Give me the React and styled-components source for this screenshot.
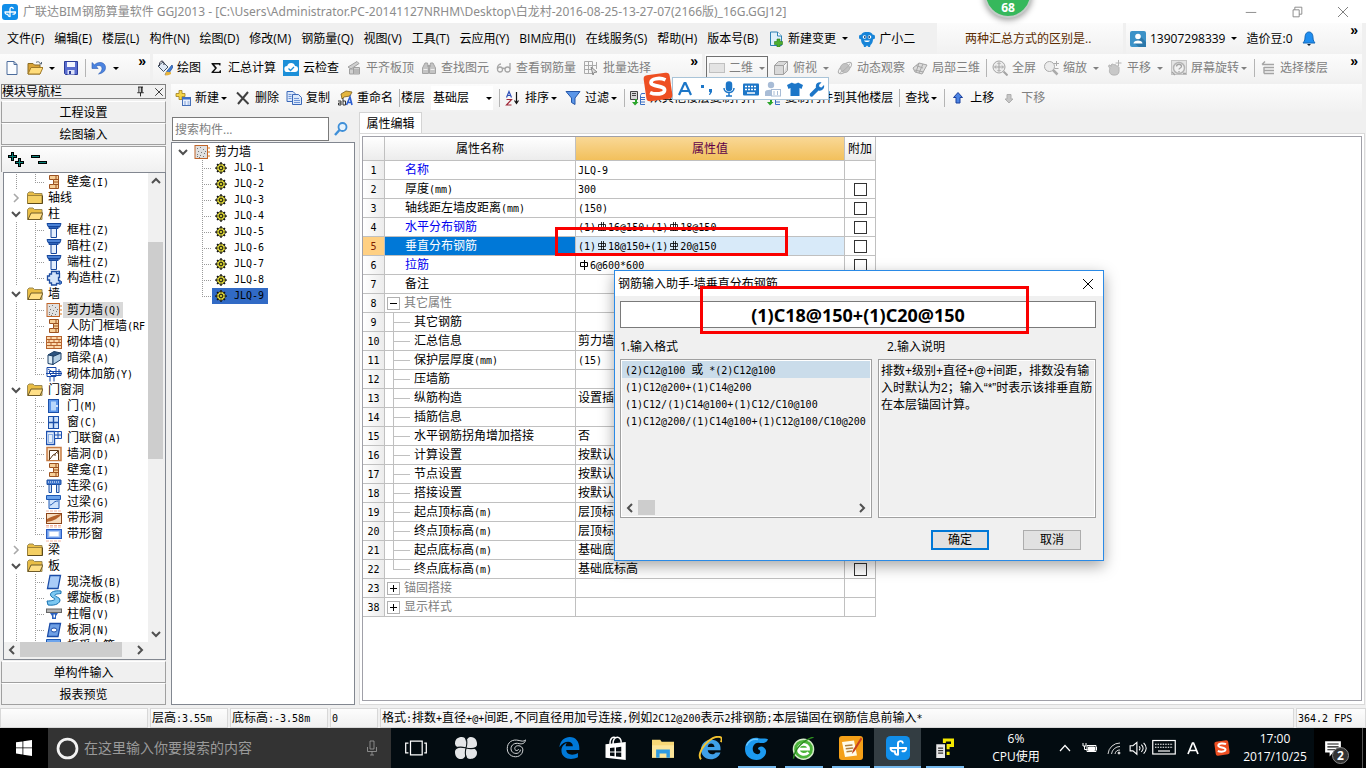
import React from "react"
import styled, { createGlobalStyle, css } from "styled-components"

const uiFont = `"Open Sans", "Noto Sans CJK SC", sans-serif`

/* ---------- data ---------- */

const menus = [
  "文件(F)", "编辑(E)", "楼层(L)", "构件(N)", "绘图(D)", "修改(M)", "钢筋量(Q)",
  "视图(V)", "工具(T)", "云应用(Y)", "BIM应用(I)", "在线服务(S)", "帮助(H)", "版本号(B)",
]

const drawTools = [
  { icon: "paint", label: "绘图" },
  { icon: "sigma", label: "汇总计算" },
  { icon: "cloud", label: "云检查" },
  { icon: "align", label: "平齐板顶", off: true },
  { icon: "binoculars", label: "查找图元", off: true },
  { icon: "glasses", label: "查看钢筋量", off: true },
  { icon: "batch", label: "批量选择", off: true },
]

const viewTools = [
  { icon: "cube", label: "俯视", caret: "wide" },
  { icon: "orbit", label: "动态观察" },
  { icon: "part3d", label: "局部三维" },
  { sep: true },
  { icon: "fullscreen", label: "全屏" },
  { icon: "zoomer", label: "缩放", caret: "wide" },
  { icon: "pan", label: "平移", caret: "wide" },
  { icon: "rotate", label: "屏幕旋转", caret: "tight" },
  { sep: true },
  { icon: "floors", label: "选择楼层" },
]

const navTree = [
  { icon: "niche", label: "壁龛(I)", last: true },
  { folder: "closed", label: "轴线" },
  { folder: "open", label: "柱" },
  { icon: "column", label: "框柱(Z)" },
  { icon: "column", label: "暗柱(Z)" },
  { icon: "column", label: "端柱(Z)" },
  { icon: "gearColumn", label: "构造柱(Z)", last: true },
  { folder: "open", label: "墙" },
  { icon: "wall", label: "剪力墙(Q)", active: true },
  { icon: "niche", label: "人防门框墙(RF" },
  { icon: "brick", label: "砌体墙(Q)" },
  { icon: "darkBeam", label: "暗梁(A)" },
  { icon: "rebarWall", label: "砌体加筋(Y)", last: true },
  { folder: "open", label: "门窗洞" },
  { icon: "door", label: "门(M)" },
  { icon: "window", label: "窗(C)" },
  { icon: "doorWindow", label: "门联窗(A)" },
  { icon: "wallHole", label: "墙洞(D)" },
  { icon: "niche", label: "壁龛(I)" },
  { icon: "linkBeam", label: "连梁(G)" },
  { icon: "lintel", label: "过梁(G)" },
  { icon: "stripHole", label: "带形洞" },
  { icon: "stripWindow", label: "带形窗", last: true },
  { folder: "closed", label: "梁" },
  { folder: "open", label: "板" },
  { icon: "slab", label: "现浇板(B)" },
  { icon: "spiral", label: "螺旋板(B)" },
  { icon: "cap", label: "柱帽(V)" },
  { icon: "slabHole", label: "板洞(N)" },
  { icon: "lintel", label: "板受力筋(S)" },
]

const walls = [1, 2, 3, 4, 5, 6, 7, 8, 9].map(n => `JLQ-${n}`)

const rows = [
  { n: 1, name: "名称", value: "JLQ-9", blue: true, noBox: true },
  { n: 2, name: "厚度(mm)", value: "300" },
  { n: 3, name: "轴线距左墙皮距离(mm)", value: "(150)" },
  { n: 4, name: "水平分布钢筋", value: "(1)C16@150+(1)C18@150", rebar: true, blue: true },
  { n: 5, name: "垂直分布钢筋", value: "(1)C18@150+(1)C20@150", rebar: true, selected: true },
  { n: 6, name: "拉筋", value: "A6@600*600", rebar: true, blue: true },
  { n: 7, name: "备注", value: "" },
  { n: 8, name: "其它属性", value: "", group: "minus", noBox: true },
  { n: 9, name: "其它钢筋", value: "", child: true },
  { n: 10, name: "汇总信息", value: "剪力墙", child: true },
  { n: 11, name: "保护层厚度(mm)", value: "(15)", child: true },
  { n: 12, name: "压墙筋", value: "", child: true },
  { n: 13, name: "纵筋构造", value: "设置插筋", child: true },
  { n: 14, name: "插筋信息", value: "", child: true },
  { n: 15, name: "水平钢筋拐角增加搭接", value: "否", child: true },
  { n: 16, name: "计算设置", value: "按默认计算设置计算", child: true },
  { n: 17, name: "节点设置", value: "按默认节点设置计算", child: true },
  { n: 18, name: "搭接设置", value: "按默认搭接设置计算", child: true },
  { n: 19, name: "起点顶标高(m)", value: "层顶标高", child: true },
  { n: 20, name: "终点顶标高(m)", value: "层顶标高", child: true },
  { n: 21, name: "起点底标高(m)", value: "基础底标高", child: true },
  { n: 22, name: "终点底标高(m)", value: "基础底标高", child: true, last: true },
  { n: 23, name: "锚固搭接", value: "", group: "plus", noBox: true },
  { n: 38, name: "显示样式", value: "", group: "plus", noBox: true },
]

const formats = [
  "(2)C12@100 或 *(2)C12@100",
  "(1)C12@200+(1)C14@200",
  "(1)C12/(1)C14@100+(1)C12/C10@100",
  "(1)C12@200/(1)C14@100+(1)C12@100/C10@200",
]

/* ---------- icons ---------- */

const folderBack = <path d="M.5 3.500 2 2h4l1.500 1.500H15v10H.5z" fill="#e9bd45" stroke="#9c8a55" />

const icons = {
  app: (
    <>
      <rect width="16" height="16" rx="3" fill="#118ee9" />
      <path
        d="M3 8h10.500M8 12.500V5c0-1.800 2.800-2.200 3.200-.5M3 8c0 2 1.500 2.500 3 2.200M13.500 8c0 2-1.500 2.300-2.500 2.200M8 12.500c-1.300 0-2-.6-2-1.500"
        fill="none"
        stroke="#fff"
        strokeWidth="1.300"
        strokeLinecap="round"
      />
    </>
  ),
  page: <path d="M3 1.500h7l3 3v10H3z M10 1.500v3h3" fill="#fbfdff" stroke="#4c6c9c" />,
  folderOpenBig: (
    <>
      <path d="M1 3.500h5l1.500 1.500H13v9H1z" fill="#d9a336" stroke="#8a6b22" />
      <path d="M1 14 4 7.500h12L13 14z" fill="#ffdc7a" stroke="#a07a28" />
      <path d="M9 2.500c2-1.500 4-.5 4.500 1.500m1-2v2h-2" fill="none" stroke="#567" />
    </>
  ),
  save: (
    <>
      <path d="M1.500 1.500h13v13h-12l-1-1z" fill="#5a6ed0" stroke="#2c3c98" />
      <path d="M4 2h8v5H4z" fill="#f4f6fe" />
      <path d="M4.500 10h7v4.500h-7z" fill="#dce2f8" />
      <path d="M6 11h2v3H6z" fill="#2c3c98" />
    </>
  ),
  undo: <path d="M1 2.500v6h6.200L5 6.500c2.500-2 6-.8 6 2 0 2-1 3.500-3.500 5.500 4.500-.8 7-3 7-6.500C14.500 2.500 8 .5 3.500 4.800z" fill="#4c84e0" stroke="#2c5cb4" strokeWidth=".6" />,
  paint: (
    <>
      <path d="m1 6 5-4 5 5-4.500 4.500z" fill="#dfe8f4" stroke="#456" />
      <path d="M2.500 6c-.5-3 1-5 2.500-5s2 2 2 4" fill="none" stroke="#334" />
      <path d="m15 5-5 6-2 4 4-2 4-6z" fill="#3f7fd8" stroke="#1d4690" strokeWidth=".7" />
      <path d="M9 12c2-1 3 1 5 0v2c-2 1-4 2-6 1z" fill="#e7b33c" />
    </>
  ),
  sigma: <path d="M3.500 3h9v2.500h-1L10.800 4.400H6.200L9 8l-3.200 3.700h5.200l1-1.500h1V13h-9.500v-1L7 8.300 3.500 4z" fill="#111" />,
  cloud: (
    <>
      <rect width="16" height="16" fill="#1c8fd8" />
      <path d="M4.500 12a3 3 0 0 1-.3-6A4 4 0 0 1 12 6a3 3 0 0 1 0 6z" fill="#fff" />
      <path d="m5.500 8.500 2 2 3.500-3.500" fill="none" stroke="#1c8fd8" strokeWidth="1.300" />
    </>
  ),
  align: (
    <g fill="#d0d0d0" stroke="#a0a0a0">
      <path d="m2 7 9-5.500 2 2L5 9z" />
      <path d="M3.500 9h4v5h-4z M7.500 7.500h6v6.500h-6z" />
      <path d="M8 10h5M8 12h5" />
    </g>
  ),
  binoculars: (
    <g fill="#c4c4c4" stroke="#a4a4a4">
      <path d="M1.500 13.500V8L4 3h2.500l1 5v5.500z M8.500 13.500V8l1-5H12l2.500 5v5.500z" />
      <path d="M6.500 6h3" strokeWidth="2" />
      <path d="M2.500 9.500h4M9.500 9.500h4" stroke="#eee" />
    </g>
  ),
  glasses: (
    <g fill="none" stroke="#a6a6a6" strokeWidth="1.300">
      <circle cx="4" cy="9.500" r="2.500" />
      <circle cx="11.500" cy="9.500" r="2.500" />
      <path d="M6.500 9c.5-1 2-1 2.500 0M1.500 9C1 6 3 4 5 4M14 9V3" />
    </g>
  ),
  batch: (
    <g fill="none" stroke="#aaa">
      <path d="M1.500 1.500h8v12h-8zM1.500 5.500h12M1.500 9.500h8M5.500 1.500v12" />
      <path d="m8 7 6 5-3 .5-1 2.500z" fill="#ddd" stroke="#888" />
      <path d="M13.500 2v7" />
    </g>
  ),
  flat: <rect x=".5" y="3.500" width="15" height="9" fill="#e3e3e3" stroke="#c0c0c0" />,
  cube: <path d="M1.500 5.500h9v9h-9z M1.500 5.500l4-4h9l-4 4 M14.500 1.500v9l-4 4" fill="#d9d9d9" stroke="#a2a2a2" />,
  orbit: (
    <g stroke="#b0b0b0">
      <ellipse cx="8" cy="8" rx="8" ry="3.500" transform="rotate(-38 8 8)" fill="none" />
      <circle cx="8" cy="8" r="4.500" fill="#c2c2c2" stroke="#b4b4b4" />
      <path d="M3 12.500C7 11 11 7 13 3.500" fill="none" />
    </g>
  ),
  part3d: (
    <g fill="#dcdcdc" stroke="#a6a6a6">
      <path d="m1 8 6-5 8 2-5 9-7-2z" />
      <path d="m4 5.500 7 2.500M7 3 4 12M11 4l-4 9M2.500 10l9 2" fill="none" />
    </g>
  ),
  fullscreen: (
    <g fill="none" stroke="#a4a4a4">
      <circle cx="7" cy="7" r="6" fill="#ececec" />
      <path d="M7 3v8M3 7h8M5.500 4 7 2.500 8.500 4M5.500 10 7 11.500 8.500 10M4 5.500 2.500 7 4 8.500M10 5.500 11.500 7 10 8.500" />
      <path d="m11.500 11.500 4 4" strokeWidth="2" />
    </g>
  ),
  zoomer: (
    <g fill="none" stroke="#ababab">
      <circle cx="6.500" cy="6.500" r="5" fill="#ececec" />
      <path d="m10 10 4.500 4.500" strokeWidth="2.500" />
      <path d="M11 3.500h5M13.500 1v5M11.500 8.500h4" />
    </g>
  ),
  pan: (
    <g fill="#c8c8c8" stroke="#b4b4b4">
      <path d="M3 8c-2-1-2-3 0-3l1 1.500V5c1-1.500 2.500-1 3 0 1-1 2 0 2.500 1 1-.5 2 .5 2.500 1.500v4c0 3-3 4-6 3.500C3 14.500 1.500 12 3 8z" />
      <path d="M11.500 0v6M8.500 3h6" fill="none" />
    </g>
  ),
  rotate: (
    <g fill="none" stroke="#c4c4c4">
      <rect x=".5" y=".5" width="15" height="14" fill="#e4e4e4" />
      <circle cx="8" cy="8" r="5.500" fill="#f2f2f2" stroke="#b4b4b4" strokeWidth="1.500" />
      <path d="M5.500 6.500c0-3 5-3 5 0 0 1.500-2.500 1.500-2.500 3M8 11v1.500M1 12l3 3M12 13.500h3" stroke="#a4a4a4" strokeWidth="1.300" />
    </g>
  ),
  floors: (
    <g fill="none" stroke="#a4a4a4" strokeWidth="1.400">
      <path d="M2 4.500h12M4 7.500h10M4 10.500h10M4 13.500h10M2 4.500 5 1.500M4 7v6.500" />
    </g>
  ),
  addNew: (
    <>
      <path d="M4 .5h3v3h3v3H7v3H4v-3H1v-3h3z" fill="#f6d648" stroke="#a08020" strokeWidth=".8" />
      <rect x="7.500" y="7.500" width="8" height="8" fill="#e9f0fc" stroke="#4770b8" />
      <path d="M8 8.500h7" stroke="#3b6fcf" strokeWidth="2" />
      <path d="M9 12h2M12.500 12h2M9 14h2M12.500 14h2" stroke="#7a9cd8" />
    </>
  ),
  remove: <path d="M2 2.500 13.500 14M13 2 3 14" stroke="#404040" strokeWidth="2" fill="none" />,
  copy: (
    <g fill="#dbe8fb" stroke="#3b68b8">
      <path d="M1 1.500h6l2 2v8H1z" />
      <path d="M6.500 4.500h6l3 3v7h-9z" />
      <path d="M8 8.500h5M8 10.500h6M8 12.500h6M2.500 4.500h3M2.500 6.500h3M2.500 8.500h3" stroke="#6f95d6" />
    </g>
  ),
  rename: (
    <>
      <path d="M4 4 9 1l6 1-2 4-6 1-2 2z" fill="#e3b53f" stroke="#7a5d1d" strokeWidth=".8" />
      <path d="M9.500 15 13 7l2 8M11 12.500h4" stroke="#2d5fd0" strokeWidth="1.600" fill="none" />
      <path d="M1 11h3v4H1.500v-2H4M6 8v7h2.500v-4H6" stroke="#333" fill="none" />
    </>
  ),
  sortAz: (
    <>
      <path d="M1.500 7.500 4 1.500l2.500 6M2.500 5.500h3" fill="none" stroke="#2c4fb8" strokeWidth="1.200" />
      <path d="M1.500 9.500h5l-5 5.500h5" fill="none" stroke="#a02838" strokeWidth="1.200" />
      <path d="M11.500 2v11M9.500 10.500l2 3 2-3" fill="none" stroke="#111" strokeWidth="1.200" />
    </>
  ),
  funnel: <path d="M1 1.500h14L10 8v6.500l-3.500-2V8z" fill="#5b96e8" stroke="#2657a8" />,
  copyFrom: (
    <>
      <path d="M.5 1.500h7v8h-7z" fill="#d6d6d6" stroke="#444" />
      <path d="M2 3.500h4M2 5.500h4" stroke="#444" />
      <path d="M5 9v3H2l3 3.500L8.500 12H7V9z" fill="#2ba52b" />
      <path d="M15 3.500h-3.500l-1 2v9H15M10.500 7.500H15M10.500 9.500H15M10.500 12H15" fill="none" stroke="#3a6fc4" />
    </>
  ),
  arrowUp: <path d="M8 2.500 12.500 7.500H10V13H6V7.500H3.500z" fill="#4c84e4" stroke="#1b409c" />,
  arrowDown: <path d="M8 13 4 9h2V4.500h4V9h2z" fill="#c6c6c6" stroke="#aeaeae" />,
  docPlus: (
    <>
      <path d="M2.500 1h7l4 4v9.500h-11z" fill="#dff0fb" stroke="#2d80b4" />
      <path d="M9.500 1v4h4" fill="#fff" stroke="#2d80b4" />
      <path d="M9 8h3v2.500h2.500v3H12V16H9v-2.500H6.500v-3H9z" fill="#4caf2e" stroke="#2b7a18" strokeWidth=".6" />
    </>
  ),
  mascot: (
    <>
      <path d="M0 6c0-2 1-2.500 2-2 1-2.500 3.500-3 6-3s5 .5 6 3c1-.5 2 0 2 2s-1 2.500-2 2c0 3-1 5-2.500 6l-.5 2H9.500L8 14.500 6.500 16H5l-.5-2C3 13 2 11 2 8 1 8.500 0 8 0 6z" fill="#1784d8" />
      <circle cx="5.500" cy="6" r="1.800" fill="#fff" />
      <circle cx="10.500" cy="6" r="1.800" fill="#fff" />
      <circle cx="5.800" cy="6" r=".9" fill="#103c70" />
      <circle cx="10.200" cy="6" r=".9" fill="#103c70" />
      <path d="M5 9.500h6c-1 2-5 2-6 0z" fill="#fff" />
    </>
  ),
  user: (
    <>
      <rect width="16" height="16" rx="2" fill="#3c92c8" />
      <path d="m10 5 6 6v5H9l-5-4z" fill="#2c78aa" />
      <circle cx="8" cy="5.500" r="2.800" fill="#fff" />
      <path d="M3.500 12.500c0-4 9-4 9 0z" fill="#fff" />
    </>
  ),
  bell: (
    <>
      <path d="M8 1c3 0 4 3 4 6s1.500 4 2 5H2c.5-1 2-2 2-5s1-6 4-6z" fill="#1f8ef0" stroke="#1568b8" />
      <path d="M6 13h4l-2 2z" fill="#123" />
    </>
  ),
  magnify: (
    <g fill="none" stroke="#3f8fd8">
      <circle cx="9.500" cy="6" r="4" strokeWidth="1.800" fill="#e7f3fd" />
      <path d="m6.500 9-4.500 5" strokeWidth="2.400" />
    </g>
  ),
  expandAll: (
    <g fill="none">
      <path d="M4.500 0v9M0 4.500h9M11.500 6v9M7 10.500h9" stroke="#000" strokeWidth="3" />
      <path d="M4.500 1v7M1 4.500h7M11.500 7v7M8 10.500h7" stroke="#0a8078" />
    </g>
  ),
  collapseAll: (
    <g fill="none">
      <path d="M0 4.500h9M7 10.500h9" stroke="#000" strokeWidth="3" />
      <path d="M1 4.500h7M8 10.500h7" stroke="#0a8078" />
    </g>
  ),
  folderClosed: (
    <>
      {folderBack}
      <path d="M.5 5.500H15v8H.5z" fill="#f4cf63" stroke="#8d7430" strokeWidth=".8" />
      <path d="M1 13.500h14.500v-8" fill="none" stroke="#5c4a1c" />
    </>
  ),
  folderOpen: (
    <>
      {folderBack}
      <path d="M1 13.500 4 7h12l-3 6.500z" fill="#ffdf86" stroke="#6e5a28" />
    </>
  ),
  niche: (
    <g fill="#f7cf98" stroke="#9c5220">
      <path d="M3.500 1.500h9v13h-9v-4h4v-5h-4z" />
      <path d="M7.500 5.500h5M7.500 8h5M7.500 10.500h5M10 1.500v4M10 10.500v4" fill="none" />
    </g>
  ),
  column: (
    <g stroke="#16479c">
      <path d="M1 1.500h14l-1 3H2z" fill="#4c83d6" />
      <path d="M3 4.500h9v2H3z" fill="#2d62b8" />
      <path d="M5 6.500h5.500v9H5z" fill="#e3eefc" />
      <path d="m12 6.500 2-2" />
    </g>
  ),
  gearColumn: (
    <g stroke="#1d4ca0" fill="#d4e4fa">
      <path d="M5.500 1.500h5v2h3v4h-1v3h1v3h-3v1.500h-5v-2h-2v-3h-2v-4h2v-2h2z" strokeWidth="1.300" />
      <path d="m10.500 1.500 3-.5v2.500M13.500 10.500l2 1v2l-2 1" fill="#4c83d6" />
    </g>
  ),
  wall: (
    <>
      <rect x="1" y="1.500" width="12.500" height="13" fill="#e0e0e0" stroke="#c06428" />
      <path
        d="M3 4.500h1M6 3.500h1M9 5.500h1M4 7.500h1M7 8.500h1M10 9.500h1M3 10.500h1M6 11.500h1M9 12.500h1M11 7.500h1M5 13.500h1M3 12.500h1"
        stroke="#777"
      />
      <path d="M13.500 4h2.500M13.500 8h2.500M13.500 12h2.500" stroke="#d87820" />
    </>
  ),
  brick: (
    <g stroke="#b5622c" fill="#fbd9ae">
      <rect x=".5" y="2.500" width="15" height="12" />
      <path d="M.5 5.500h15M.5 8.500h15M.5 11.500h15M5 2.500v3M11 2.500v3M3 5.500v3M8 5.500v3M13 5.500v3M5 8.500v3M11 8.500v3M8 11.500v3" />
    </g>
  ),
  darkBeam: (
    <g stroke="#1c3f66">
      <path d="m2 5 6-3.500L15 3 9 6z" fill="#2d5480" />
      <path d="M2 5v8.500l5 1V6z" fill="#dcecf6" />
      <path d="M7 6.500v8l8-5V3z" fill="#b4cfe4" />
    </g>
  ),
  rebarWall: <path d="M1 10.500V1.500h9v9zM0 7.500h16M3 5.500h12v4H5zM4 10v5.500M8 10v5.500M2 3l6 4M13 3v6" fill="none" stroke="#1546a8" />,
  door: (
    <>
      <rect x="2.500" y="1.500" width="10" height="13" fill="#5c96ea" stroke="#1b4fa8" />
      <rect x="5" y="3.500" width="5" height="9" fill="#b8d6fa" />
      <circle cx="11" cy="8" r="1" fill="#fff" />
    </>
  ),
  window: (
    <>
      <rect x="2.500" y="2.500" width="10" height="12" fill="#cfe3fb" stroke="#1b4fa8" />
      <path d="M7.500 2.500v12M2.500 8.500h10" stroke="#1b4fa8" strokeWidth="1.400" />
    </>
  ),
  doorWindow: (
    <g fill="#e6f0fc" stroke="#1c50b0">
      <rect x=".5" y="1.500" width="8" height="13" strokeWidth="1.400" />
      <rect x="2.500" y="4.500" width="4" height="8" stroke="#8fb2e6" />
      <path d="M8.500 1.500h7v7h-7zM12 1.500v7M8.500 5h7" />
    </g>
  ),
  wallHole: (
    <>
      <rect x="1" y="1.500" width="14" height="13" fill="#fbe3c8" stroke="#c67c44" strokeWidth="1.500" />
      <path d="M3.500 14V4.500h9V14" fill="#fff" stroke="#5a3818" />
      <path d="m4 13 3-4 2-1 3-3M9 8v2M12 5v3" fill="none" stroke="#5a3818" />
    </>
  ),
  linkBeam: (
    <g stroke="#1d50a4">
      <path d="M1 2h14v4.500H1z" fill="#3c74cc" />
      <path d="M2 4h12" strokeDasharray="1 1" stroke="#fff" />
      <path d="M3 6.500h2.500v8H3zM10.500 6.500H13v8h-2.500z" fill="#cfe0f8" />
    </g>
  ),
  lintel: (
    <g stroke="#1d58b4" fill="#cfe3fb">
      <path d="M.5 1.500h14v4H.5z" fill="#6da4ec" />
      <path d="M3 5.500h10v9H3z" />
      <path d="M4 11c3 0 3-4 8-4" fill="none" />
    </g>
  ),
  stripHole: (
    <>
      <rect x=".5" y="3.500" width="15" height="10" fill="#f7ddc0" stroke="#8c4418" />
      <path d="M1 12c5-1 9-2 14-7v-1C9 5 5 7 1 9z" fill="#b5622c" />
      <path d="M0 1h16M0 15.500h16" stroke="#f2b4a0" strokeDasharray="3 1" />
    </>
  ),
  stripWindow: (
    <>
      <rect x=".5" y="3.500" width="15" height="9" fill="#6c9cec" stroke="#2a5cc0" />
      <rect x="3" y="5.500" width="10" height="5" fill="#fff" stroke="#b8cff4" />
      <path d="M0 1h16M0 15h16" stroke="#f2b4a0" strokeDasharray="3 1" />
    </>
  ),
  slab: <path d="M4 1.500h10.500L12 14.500H1.500z" fill="#a9ccf8" stroke="#1a4ca8" strokeWidth="1.300" />,
  spiral: <path d="M15 1C7 0 3 3 5 6c1 2 4 2 4 3s-3 2-8 2l1 4c8 1 12-2 12-5s-5-3-5-4.500S11 4 15 3.500z" fill="#7cc8f2" stroke="#1670b0" />,
  cap: (
    <>
      <rect x=".5" y="3" width="15" height="3.500" fill="#b4b4b4" stroke="#666" />
      <path d="M4 7h8l-2 3v3H6v-3z" fill="#2b62c0" />
      <path d="M7.500 8.500h1.500v3H7.500z" fill="#fff" />
    </>
  ),
  slabHole: (
    <>
      <path d="M4 1.500h10.500L12 14.500H1.500z" fill="#6e9fe4" stroke="#1a4ca8" strokeWidth="1.300" />
      <ellipse cx="8" cy="8" rx="3" ry="2" fill="#fff" stroke="#1a4ca8" />
    </>
  ),
  cog: (
    <>
      <path d="M8 1.500v13M1.500 8h13M3.500 3.500l9 9M12.500 3.500l-9 9" stroke="#111" strokeWidth="2" />
      <circle cx="8" cy="8" r="5" fill="#ece434" stroke="#222" />
      <path d="M8 3.500v9M3.500 8h9M5 5l6 6M11 5l-6 6" stroke="#222" strokeWidth=".8" />
      <circle cx="8" cy="8" r="1.800" fill="#ece434" stroke="#111" />
    </>
  ),
  sogou: (
    <>
      <rect x="1" y="1" width="14" height="14" rx="2" fill="#ee4f22" transform="rotate(-8 8 8)" />
      <path d="M12 4.200C9 2.800 4.300 3.500 4.300 5.600c0 2.400 7.200 1.500 7.200 4 0 2.200-4.700 2.700-7.700 1.400" fill="none" stroke="#fff" strokeWidth="2" />
    </>
  ),
  letterA: <path d="M2 14 7.500 2h1L14 14M4 10h8" fill="none" stroke="#1c76c8" strokeWidth="2.200" />,
  comma: <path d="M2 4h3v3H2zM10 8h3v3l-2 3h-1l1-3h-1z" fill="#1c76c8" />,
  mic: (
    <g fill="none" stroke="#1c76c8" strokeWidth="1.500">
      <rect x="5.500" y="1" width="5" height="8.500" rx="2.500" fill="#1c76c8" />
      <path d="M3 7c0 6 10 6 10 0M8 11.500V15M5 15h6" />
    </g>
  ),
  keyboard: (
    <>
      <rect y="2.500" width="16" height="12" rx="1" fill="#1c76c8" />
      <path d="M2 5.500h12M2 8.500h12" stroke="#fff" strokeWidth="1.500" strokeDasharray="2 1" />
      <path d="M4 12h8" stroke="#fff" strokeWidth="1.500" />
    </>
  ),
  person: (
    <g fill="#a8bcd6">
      <circle cx="6" cy="4" r="3.200" />
      <path d="M0 15V11c0-3 10-3 11 0v4z" />
      <rect x="6.500" y="8.500" width="9" height="6.500" fill="#fff" stroke="#a8bcd6" />
      <path d="M9 10v4M12.500 10v4" stroke="#a8bcd6" />
    </g>
  ),
  shirt: <path d="M5 1.500c1 1.500 5 1.500 6 0l5 2.500-1.500 4L12.500 7v8h-9V7L1.500 8 0 4z" fill="#1c76c8" />,
  wrench: <path d="m1 12.500 6-6C6 3 9 .5 12.500 1.500L10 4l.5 2 2 .5L15 4c1 3.500-2 6.500-5.500 5.500l-6 6c-2 1-3.500-1-2.500-3z" fill="#1c76c8" />,
  pin: <path d="M5 2.500h6M6 2.500V9M10 2.500V9M9 2.500V9M4 9.500h8M8 9.500V14" fill="none" stroke="#000" />,
  cross: <path d="m3 3 10 10M13 3 3 13" fill="none" stroke="currentColor" />,
  min: <path d="M2 8.500h12" fill="none" stroke="currentColor" />,
  restore: <path d="M3.500 5.500h7v8h-7zM5.500 5.500v-3h8v8h-3" fill="none" stroke="currentColor" />,
  chevUp: <path d="m4 10 4-4 4 4" fill="none" stroke="#505050" strokeWidth="2" />,
  chevDown: <path d="m4 6 4 4 4-4" fill="none" stroke="#505050" strokeWidth="2" />,
  chevLeft: <path d="M10 4 6 8l4 4" fill="none" stroke="#505050" strokeWidth="2" />,
  chevRight: <path d="m6 4 4 4-4 4" fill="none" stroke="#505050" strokeWidth="2" />,
  treeRight: <path d="m6 4 4 4-4 4" fill="none" stroke="#a8a8a8" strokeWidth="1.600" />,
  // taskbar
  start: <path d="m0 2.300 6.500-.9v6.100H0zM7.300 1.300 16 0v7.500H7.300zM0 8.300h6.500v6.200L0 13.600zM7.300 8.300H16V16l-8.700-1.300z" fill="#fff" />,
  cortana: <circle cx="8" cy="8" r="6.600" fill="none" stroke="#f2f2f2" strokeWidth="1.900" />,
  micThin: <path d="M6 1h4v8H6zM3.500 7v4.500h9V7M8 11.500V15M6 15h4" fill="none" stroke="#a0a0a0" strokeWidth=".8" />,
  taskview: <path d="M4 3h8.500v10H4zM2.500 4.500h-2v7h2M14 4.500h1.500v7H14" fill="none" stroke="#fff" strokeWidth=".9" />,
  pinwheel: (
    <>
      <g fill="#e4e6e8">
        <path d="M8 8C5 8.500 0 8 0 4.500 0 1 3 0 5 0c2.500 0 3.500 2 3 8z" />
        <path d="M8 8C7.500 5 8 0 11.500 0 15 0 16 3 16 5c0 2.500-2 3.500-8 3z" />
        <path d="M8 8c3-.5 8 0 8 3.500 0 3.500-3 4.500-5 4.500-2.500 0-3.500-2-3-8z" />
        <path d="M8 8c.5 3 0 8-3.500 8C1 16 0 13 0 11c0-2.500 2-3.500 8-3z" />
      </g>
      <path
        d="M7.500 0c2 3 1 6 .5 8s-1 5 .5 8M0 8.500c3-2 6-1 8-.5s5 1 8-.5"
        fill="none"
        stroke="#0b1418"
        strokeWidth=".8"
      />
    </>
  ),
  swirl: (
    <g fill="none" stroke="#d4d6d8" strokeWidth=".8">
      <path d="M15.500 1.500c-1 1.500-3 1-5 .5C5 .5 1 3.500 1 8.500c0 8 12 9 12.500 1 0-4-6.500-4.500-6.500-1 0 2 3 2 3 .3" />
      <path d="M15.500 1.500c0 3-3 3.500-5 3C7 3.500 4 5.500 4 8.500c0 5 7.500 5 7.500.8" />
    </g>
  ),
  edge: <path d="M1 7.500C1.500 2.500 5 0 8.500 0 13 0 15.500 3.500 15.500 8v1.500H6c.2 4 5.500 4 8.500 2.200v3C9 17.500 2.500 15.500 2.500 9.800 2.500 7 4.500 5 6.500 4.200 5.800 5 5.600 6 5.600 6.800h5.200c0-4.500-6.500-4.500-9.800.7z" fill="#0078d7" />,
  store: (
    <>
      <path d="M1 5.500 14.500 4v12L1 14.500z" fill="#fff" />
      <path d="M4 5.500C4 1 6 .5 7.500 1M6 5.500c0-6 5.500-6 5.500-1" fill="none" stroke="#fff" />
      <path d="m4 8 3-.3v2.600H4zM8 7.600l3.500-.4v3.100H8zM4 11h3v2.500l-3-.3zM8 11h3.500v3L8 13.600z" fill="#050c10" />
    </>
  ),
  explorer: (
    <>
      <path d="M0 2h6l1 1.500h9V15H0z" fill="#f8d876" />
      <path d="M0 6h16v9H0z" fill="#fde69a" />
      <path d="M3 15V9h10v6h-2.500v-3h-5v3z" fill="#2f9ae0" />
    </>
  ),
  ie: (
    <>
      <path d="M2 8.500C2.500 4.500 5.500 2.500 9 2.500c4 0 6.500 3 6 7H6.500c.3 3.300 4.500 3.300 5.200 1.500H15c-1 3-3.500 4.500-6.500 4.500-4 0-6.700-3-6.500-7zM6.500 7.300H11c-.2-3-4.300-3-4.500 0z" fill="#3fa0e8" />
      <path d="M2 15.500C-2 11 9-1.500 15 .8c1 .5 1 2 .2 3.200" fill="none" stroke="#f2c230" strokeWidth="1.300" />
    </>
  ),
  blueSwirl: (
    <>
      <path d="M16 1.500C15 4.500 12 4.500 9.500 4 5 3.500 3.500 11.500 8.500 12c2.500 0 3-3 .5-3.500 0-2 4-3 5.500.5 1 3.500-2.500 7-6.500 7C3.500 16 0 13 0 8.500 0 3 5-.5 9.500.8c2.500.7 5-.3 6.500.7z" fill="#1c9af0" />
      <path d="M1 6c1-3 4-5 8-4.300" fill="none" stroke="#6cc8ff" />
    </>
  ),
  greenE: (
    <>
      <circle cx="8" cy="8.500" r="7" fill="#4cb43a" stroke="#d4ecc8" />
      <path d="M4.500 8.500h7c0-4.500-7-4.500-7 0 0 3.800 4.500 4.500 7 2.200" fill="none" stroke="#fff" strokeWidth="1.900" />
      <path d="M1 15C2 8 8 2 15 0" fill="none" stroke="#2c8c20" />
    </>
  ),
  note: (
    <>
      <rect width="16" height="16" rx="2" fill="#f4a018" />
      <path d="M2 4l8-1 2 10-8 1z" fill="#fffbe8" />
      <path d="M4 6.500 9 6M4.500 8.500l5-.5M5 10.500l4-.5" stroke="#b08040" />
      <path d="m14.500 1-5 8-1 3 2-2 5-8z" fill="#c8401c" />
    </>
  ),
  docHelp: (
    <>
      <path d="M1 5h7v11H1z" fill="#e8e8e8" />
      <path d="M2.500 8h4M2.500 10h4M2.500 12h4" stroke="#333" />
      <path d="M7.500 4V1.500H14V6h-3.500v3M10.500 11v2.500" fill="none" stroke="#f4e800" strokeWidth="2.400" />
    </>
  ),
  trayUp: <path d="m3 11 5-5.500L13 11" fill="none" stroke="#fff" strokeWidth="1.200" />,
  battery: (
    <g fill="none" stroke="#fff">
      <path d="M5 5.500h9v6H5zM14.500 7v3" />
      <path d="M6.500 7h6v3.500h-6z" fill="#fff" />
      <path d="M1 3v3h3V3M2.500 6v3.500h3" />
    </g>
  ),
  wifi: (
    <g fill="none" stroke="#d8d8d8">
      <path d="M2 14A12 12 0 0 1 14 3M5.500 14A8.500 8.500 0 0 1 14 6.500M9 14a5 5 0 0 1 5-4" />
      <circle cx="13" cy="13" r="1" fill="#fff" />
    </g>
  ),
  volume: (
    <g fill="none" stroke="#fff">
      <path d="M1 6v4.500h2.500L7 13.500V3L3.500 6z" />
      <path d="M9 6.500c1 1 1 2.500 0 3.500M11 5c2 2 2 4.500 0 6.500M13 3.500c3 3 3 6.500 0 9.500" />
    </g>
  ),
  trayKeys: (
    <g fill="none" stroke="#fff" strokeWidth=".8">
      <rect x=".5" y="3" width="15" height="9" />
      <path d="M2 5.500h12M2 7.500h12" strokeDasharray="1 .7" />
      <path d="M4 10h8" />
    </g>
  ),
  trayA: <path d="M3 14 7.500 3h1L13 14M4.800 10.500h6.400" fill="none" stroke="#fff" strokeWidth="1.700" />,
  notice: (
    <>
      <path d="M1 2h14v10H8l-3 3.500V12H1z" fill="#fff" />
      <path d="M3 4.500h10M3 7h10M3 9.500h7" stroke="#111" strokeWidth=".9" />
    </>
  ),
}

const Svg = styled.svg`
  display: block;
  flex: none;
`

const Icon = ({ name, size = 16 }) => (
  <Svg width={size} height={size} viewBox="0 0 16 16" aria-hidden="true">
    {icons[name]}
  </Svg>
)

const CaretShape = styled.span`
  flex: none;
  width: 9px;
  height: 16px;
  margin-left: ${p => (p.$tight ? 0 : 4)}px;
  display: flex;
  align-items: center;
  justify-content: center;
  &::before {
    content: "";
    border: 3px solid transparent;
    border-top-color: currentColor;
    border-bottom: 0;
  }
`

const More = styled.span`
  align-self: flex-start;
  padding: 0 4px;
  font: bold 14px/14px "Liberation Sans", sans-serif;
  color: #000;
`

/* ---------- fixed-pitch text: half-width latin beside full-width han ---------- */

const Half = styled.span`
  font: 10px "DejaVu Sans Mono", monospace;
  line-height: 1;
  white-space: pre;
`

const Pitch = ({ text }) =>
  text
    .split(/([\x20-\x7e]+)/)
    .filter(Boolean)
    .map((part, i) => (/^[\x20-\x7e]/.test(part) ? <Half key={i}>{part}</Half> : part))

const GradeSvg = styled.svg`
  vertical-align: -2px;
`

// reinforcement grade marks: A is plain round bar, C is HRB400
const Grade = ({ kind }) => (
  <GradeSvg width="12" height="12" viewBox="0 0 12 12" aria-label={kind}>
    <path
      d={kind === "C" ? "M2.500 3.500h7v3h-7zM2 9.500h8M5.500 1v9M7.500 1v9" : "M2.500 3.500h7v4h-7zM6.500 1v10"}
      fill="none"
      stroke="#000"
      strokeWidth={kind === "C" ? 0.8 : 1}
    />
  </GradeSvg>
)

const RebarText = ({ text }) =>
  text
    .split(/([AC])/)
    .filter(Boolean)
    .map((part, i) => (/^[AC]$/.test(part) ? <Grade key={i} kind={part} /> : <Pitch key={i} text={part} />))

/* ---------- page shell ---------- */

const GlobalStyle = createGlobalStyle`
  *, *::before, *::after {
    box-sizing: border-box;
  }
  body {
    margin: 0;
    font: 12px/16px ${uiFont};
    color: #000;
    background: #f0f0f0;
  }
  button, input, select {
    margin: 0;
    padding: 0;
    font: inherit;
    color: inherit;
    border: 0;
    border-radius: 0;
    background: none;
    outline: 0;
  }
  button {
    cursor: default;
    white-space: nowrap;
  }
`

const Shell = styled.div`
  position: relative;
  display: flex;
  flex-direction: column;
  height: 100vh;
  overflow: hidden;
`

const TitleBar = styled.header`
  display: flex;
  align-items: center;
  flex: none;
  height: 23px;
  padding-left: 2px;
  gap: 5px;
  background: #fff;
  color: #8c8c8c;
`

const AppTitle = styled.h1`
  flex: 1;
  margin: 0;
  font: 12px/16px "Noto Sans", "Noto Sans CJK SC", sans-serif;
  white-space: nowrap;
`

const WindowButton = styled.button`
  display: flex;
  align-items: center;
  justify-content: center;
  width: 46px;
  height: 22px;
  color: #808080;
`

const barPanel = css`
  display: flex;
  align-items: center;
  background: linear-gradient(#fcfcfc, #f1f1f1);
`

const MenuBar = styled.nav`
  display: flex;
  flex: none;
  height: 31px;
  gap: 3px;
  padding-right: 4px;
`

const MenuList = styled.div`
  display: flex;
  align-items: center;
  gap: 10px;
  flex: none;
  width: 934px;
  padding-left: 7px;
  white-space: nowrap;
`

const MenuButton = styled.button`
  display: flex;
  align-items: center;
  gap: 4px;
`

const TipPanel = styled.div`
  ${barPanel}
  flex: none;
  width: 186px;
  padding-left: 28px;
`

const TipLink = styled.a`
  color: #5c2c00;
  text-decoration: none;
`

const AccountPanel = styled.div`
  ${barPanel}
  flex: 1;
  gap: 8px;
  padding-left: 4px;
`

const Fill = styled.span`
  flex: 1;
`

const ToolBar = styled.div`
  display: flex;
  flex: none;
  height: 30px;
  gap: 3px;
  padding-right: 4px;
`

const ToolPanel = styled.div`
  ${barPanel}
  flex: ${p => (p.$width ? "none" : 1)};
  width: ${p => (p.$width ? `${p.$width}px` : "auto")};
  height: 28px;
  min-width: 0;
`

const ToolButton = styled.button`
  display: flex;
  align-items: center;
  flex: none;
  padding: 0 3px 0 4px;
  height: 24px;
  color: ${p => (p.$off ? "#808080" : "#000")};
`

const ToolLabel = styled.span`
  svg + & {
    margin-left: 4px;
  }
`

const PlainLabel = styled.label`
  flex: none;
`

const Separator = styled.span`
  flex: none;
  width: 1px;
  height: 18px;
  margin: 0 1px 0 3px;
  background: #b4b4b4;
`

const BoxedTool = styled(ToolButton)`
  width: 62px;
  padding: 0 2px;
  margin: 0 1px;
  border: 1px solid #707070;
`

const FloorPicker = styled.span`
  display: flex;
  align-items: center;
  flex: none;
  width: 62px;
  height: 24px;
  margin: 0 3px 0 6px;
  background: #fff;
`

const FloorSelect = styled.select`
  flex: 1;
  appearance: none;
  padding-left: 2px;
  min-width: 0;
`

const Tool = ({ icon, label, caret, off }) => (
  <ToolButton type="button" $off={off}>
    {icon && <Icon name={icon} />}
    {label && <ToolLabel>{label}</ToolLabel>}
    {caret && <CaretShape $tight={caret === "tight"} />}
  </ToolButton>
)

const Body = styled.div`
  display: flex;
  flex: 1;
  min-height: 0;
`

/* ---------- navigation panel ---------- */

const NavPanel = styled.aside`
  display: flex;
  flex-direction: column;
  flex: none;
  width: 168px;
  padding: 0 2px 3px 1px;
`

const NavHead = styled.div`
  display: flex;
  align-items: center;
  gap: 6px;
  flex: none;
  height: 15px;
  border: 1px solid #808080;
  line-height: 13px;
  margin-bottom: 2px;
`

const NavButton = styled.button`
  flex: none;
  height: 22px;
  padding-top: 1px;
  border: 1px solid #a0a0a0;
  border-top-color: #fff;
  text-align: center;
  background: #f0f0f0;
`

const NavTools = styled.div`
  display: flex;
  align-items: center;
  gap: 7px;
  flex: none;
  height: 26px;
  margin-top: 1px;
  padding: 0 6px;
  border: 1px solid #a0a0a0;
  border-bottom: 0;
  background: linear-gradient(#fdfdfd, #f0f0f0);
`

const NavTreeBox = styled.div`
  display: grid;
  grid-template-columns: minmax(0, 1fr) 17px;
  grid-template-rows: minmax(0, 1fr) 17px;
  flex: 1;
  min-height: 0;
  margin-left: 2px;
  margin-bottom: 1px;
  border: 1px solid #828790;
  background: #fff;
`

const TreeList = styled.ul`
  margin: 0;
  padding: 1px 0 0 4px;
  list-style: none;
  overflow: hidden;
`

const dots = "#9a9a9a"

const TreeRow = styled.li`
  display: flex;
  align-items: center;
  height: 16px;
  line-height: 16px;
  white-space: nowrap;
`

const Toggle = styled.span`
  display: flex;
  flex: none;
  width: 19px;
  height: 16px;
`

const Trunk = styled.span`
  flex: none;
  width: ${p => p.$width || 19}px;
  height: 16px;
  background:
    repeating-linear-gradient(${dots} 0 1px, transparent 1px 2px) 8px 0 / 1px ${p => (p.$last ? "8px" : "16px")} no-repeat,
    ${p => (p.$branch ? `repeating-linear-gradient(90deg, ${dots} 0 1px, transparent 1px 2px) 8px 8px / 10px 1px no-repeat` : "none")};
`

const TreeLabel = styled.span`
  margin-left: ${p => (p.$active ? 1 : 3)}px;
  padding: 0 2px;
  background: ${p => (p.$active ? "#d9d9d9" : "none")};
  border-left: ${p => (p.$active ? "2px solid #d9d9d9" : "0")};
`

const ScrollTrack = styled.div`
  display: flex;
  flex-direction: ${p => (p.$row ? "row" : "column")};
  background: #f0f0f0;
`

const ScrollThumb = styled.span`
  flex: none;
  margin: ${p => (p.$row ? "0" : "53px 0 0")};
  width: ${p => (p.$row ? `${p.$size}px` : "15px")};
  height: ${p => (p.$row ? "15px" : `${p.$size}px`)};
  background: #cdcdcd;
`

/* ---------- component list ---------- */

const Workspace = styled.div`
  display: flex;
  flex-direction: column;
  flex: 1;
  min-width: 0;
  padding-left: 3px;
`

const PartToolBar = styled.div`
  ${barPanel}
  flex: none;
  height: 28px;
  margin-right: 4px;
`

const Split = styled.div`
  display: flex;
  flex: 1;
  min-height: 0;
  gap: 4px;
  padding: 0 1px 3px 0;
`

const PartPanel = styled.section`
  display: flex;
  flex-direction: column;
  flex: none;
  width: 184px;
  padding-top: 4px;
`

const SearchRow = styled.div`
  display: flex;
  align-items: center;
  height: 26px;
  gap: 4px;
  padding-left: 1px;
`

const SearchInput = styled.input`
  width: 157px;
  height: 24px;
  padding-left: 2px;
  border: 1px solid #7a7a7a;
  background: #fff;
  &::placeholder {
    color: #808080;
    opacity: 1;
  }
`

const PartTree = styled.ul`
  flex: 1;
  margin: 0;
  padding: 1px 0 0 3px;
  list-style: none;
  border: 1px solid #828790;
  background: #fff;
`

const PartName = styled.span`
  display: flex;
  align-items: center;
  height: 16px;
  padding: 0 4px 0 2px;
  gap: 6px;
  background: ${p => (p.$selected ? "#316ac5" : "none")};
`

/* ---------- property editor ---------- */

const Editor = styled.section`
  display: flex;
  flex-direction: column;
  flex: 1;
  min-width: 0;
`

const TabStrip = styled.div`
  display: flex;
  flex: none;
  height: 21px;
`

const Tab = styled.button`
  width: 63px;
  margin-bottom: -1px;
  background: #fff;
  border: 1px solid #d4d4d4;
  border-bottom: 0;
`

const Sheet = styled.div`
  flex: 1;
  min-height: 0;
  padding: 2px 2px 3px;
  border: 1px solid #d9d9d9;
  background: #fff;
`

const SheetFrame = styled.div`
  height: 100%;
  overflow: hidden;
  border: 1px solid #a0a0a8;
`

const Grid = styled.table`
  width: 513px;
  table-layout: fixed;
  border-collapse: separate;
  border-spacing: 0;
  td, th {
    height: 19px;
    padding: 0;
    overflow: hidden;
    white-space: nowrap;
    font-weight: normal;
    line-height: 16px;
    border: solid #c0c0c0;
    border-width: 0 1px 1px 0;
  }
  thead th {
    height: 24px;
    background: linear-gradient(#fff, #ececec);
  }
`

const ValueHead = styled.th`
  && {
    background: linear-gradient(#f9d896, #f2c05c);
    color: #600048;
  }
`

const NumberCell = styled.th`
  background: ${p => (p.$selected ? "#ffd083" : "linear-gradient(90deg, #fff, #ececec)")};
  color: ${p => (p.$selected ? "#802000" : "#000")};
`

const NameCell = styled.div`
  display: flex;
  align-items: center;
  height: 18px;
  padding-left: ${p => (p.$indent ? 0 : 20)}px;
  color: ${p => p.$color};
  background: ${p => (p.$selected ? "#0078d7" : "none")};
`

const Fold = styled.button`
  flex: none;
  width: 13px;
  height: 13px;
  margin: 0 4px 0 2px;
  border: 1px solid #b0b0b0;
  background:
    linear-gradient(#000, #000) center / 7px 1px no-repeat,
    linear-gradient(#000, #000) center / 1px ${p => (p.$open ? 0 : 7)}px no-repeat,
    #fff;
`

const Branch = styled.span`
  flex: none;
  width: 17px;
  height: 18px;
  margin: 0 4px 0 8px;
  background:
    linear-gradient(#c0c0c0, #c0c0c0) 0 0 / 1px ${p => (p.$last ? "9px" : "100%")} no-repeat,
    linear-gradient(#c0c0c0, #c0c0c0) 0 9px / 17px 1px no-repeat;
`

const ValueCell = styled.td`
  text-indent: 2px;
  background: ${p => (p.$selected ? "#d8eaf9" : "#fff")};
`

const Tick = styled.input`
  appearance: none;
  display: block;
  width: 13px;
  height: 13px;
  margin: 0 auto;
  border: 1px solid #333;
  background: #fff;
`

const nameColor = row => (row.selected ? "#fff" : row.blue ? "#0000f0" : row.group ? "#808080" : "#000")

const PropertyRow = ({ row }) => (
  <tr>
    <NumberCell scope="row" $selected={row.selected}>
      <Pitch text={String(row.n)} />
    </NumberCell>
    <td>
      <NameCell $indent={row.group || row.child} $selected={row.selected} $color={nameColor(row)}>
        {row.group && <Fold type="button" aria-label={row.name} $open={row.group === "minus"} />}
        {row.child && <Branch $last={row.last} />}
        <span>
          <Pitch text={row.name} />
        </span>
      </NameCell>
    </td>
    <ValueCell $selected={row.selected}>
      {row.rebar ? <RebarText text={row.value} /> : <Pitch text={row.value} />}
    </ValueCell>
    <td>{!row.noBox && <Tick type="checkbox" aria-label={row.name} />}</td>
  </tr>
)

/* ---------- status bar ---------- */

const StatusBar = styled.footer`
  display: flex;
  flex: none;
  height: 20px;
  gap: 2px;
`

const StatusCell = styled.div`
  flex: ${p => (p.$width ? "none" : 1)};
  width: ${p => (p.$width ? `${p.$width}px` : "auto")};
  padding-left: 1px;
  overflow: hidden;
  white-space: nowrap;
  line-height: 18px;
  border: 1px solid #d8d8d8;
  background: linear-gradient(#fdfdfd, #f0f0f0);
`

/* ---------- windows taskbar ---------- */

const TaskBar = styled.div`
  display: flex;
  flex: none;
  height: 40px;
  background: #030c11;
  color: #fff;
`

const StartButton = styled.button`
  display: flex;
  align-items: center;
  justify-content: center;
  width: 48px;
  background: #000;
`

const TaskSearch = styled.label`
  display: flex;
  align-items: center;
  gap: 5px;
  width: 343px;
  padding: 0 11px 0 8px;
  background: #333;
`

const TaskInput = styled.input`
  flex: 1;
  min-width: 0;
  font-size: 14px;
  line-height: 20px;
  &::placeholder {
    color: #9a9a9a;
    opacity: 1;
  }
`

const TaskGroup = styled.div`
  display: flex;
  margin-left: ${p => p.$gap || 0}px;
`

const TaskButton = styled.button`
  display: flex;
  align-items: center;
  justify-content: center;
  width: ${p => p.$width}px;
  background:
    linear-gradient(#76b9ed, #76b9ed) center bottom / ${p => (p.$active ? "100%" : p.$running ? "38px" : "0")} 2px no-repeat,
    ${p => (p.$active ? "#333d42" : "none")};
`

const TrayItem = styled.div`
  display: flex;
  flex-direction: column;
  align-items: center;
  justify-content: center;
  flex: none;
  width: ${p => p.$width}px;
  line-height: 18px;
  white-space: nowrap;
`

const NoticeButton = styled.button`
  position: relative;
  display: flex;
  align-items: center;
  width: 48px;
  padding-left: 10px;
  background: #000;
`

const NoticeCount = styled.span`
  position: absolute;
  right: 13px;
  bottom: 4px;
  width: 17px;
  height: 17px;
  border: 1px solid #888;
  border-radius: 50%;
  background: #333;
  font-weight: bold;
  line-height: 15px;
  text-align: center;
`

const ShowDesktop = styled.button`
  width: 4px;
  border-left: 1px solid #555;
  background: #000;
`

/* ---------- floating pieces ---------- */

const CpuBall = styled.div`
  position: absolute;
  left: 984px;
  top: -30px;
  width: 48px;
  height: 48px;
  padding-top: 27px;
  border: 2px solid #c4ccc8;
  border-radius: 50%;
  background: #36b85c;
  box-shadow: 0 2px 6px rgba(0, 0, 0, 0.4);
  color: #fff;
  font-weight: bold;
  line-height: 18px;
  text-align: center;
`

const ImeBar = styled.div`
  position: absolute;
  left: 672px;
  top: 77px;
  display: flex;
  align-items: center;
  gap: 6px;
  width: 157px;
  height: 23px;
  padding-left: 4px;
  border: 1px solid #a9c4d8;
  background: #fff;
`

const ImeLogo = styled.span`
  position: absolute;
  left: -30px;
  top: -6px;
`

const Marker = styled.div`
  position: absolute;
  left: ${p => p.$x}px;
  top: ${p => p.$y}px;
  width: ${p => p.$w}px;
  height: ${p => p.$h}px;
  border: 3px solid #fa0000;
  pointer-events: none;
`

const Dialog = styled.div`
  position: absolute;
  left: 614px;
  top: 270px;
  width: 490px;
  display: flex;
  flex-direction: column;
  border: 1px solid #2a8ae6;
  background: #f0f0f0;
  box-shadow: 0 5px 14px rgba(0, 0, 0, 0.35);
`

const DialogHead = styled.div`
  display: flex;
  align-items: center;
  justify-content: space-between;
  height: 25px;
  padding: 0 7px 0 3px;
  background: #fff;
`

const DialogTitle = styled.h2`
  margin: 0;
  font-size: 12px;
  font-weight: normal;
`

const DialogBody = styled.div`
  display: flex;
  flex-direction: column;
  padding: 5px 7px 10px 5px;
`

const RebarInput = styled.input`
  height: 27px;
  border: 1px solid #7a7a7a;
  background: #fff;
  font: bold 18px/24px "Noto Sans", sans-serif;
  text-align: center;
`

const Columns = styled.div`
  display: grid;
  grid-template-columns: 252px minmax(0, 1fr);
  column-gap: 6px;
`

const Caption = styled.h3`
  margin: 0;
  padding-left: ${p => (p.$inset ? 9 : 0)}px;
  font-size: 12px;
  font-weight: normal;
  line-height: 16px;
  padding-top: 11px;
  padding-bottom: 4px;
`

const ListBox = styled.div`
  display: flex;
  flex-direction: column;
  height: 159px;
  padding: 1px;
  border: 1px solid #a0a0a0;
  box-shadow: inset 0 0 0 1px #fff;
  line-height: 17px;
`

const FormatList = styled.ul`
  flex: 1;
  margin: 0;
  padding: 0;
  list-style: none;
`

const FormatItem = styled.li`
  padding-left: 3px;
  white-space: nowrap;
  background: ${p => (p.$selected ? "#cadcea" : "none")};
`

const HelpText = styled.p`
  margin: 0;
  padding: 2px 0 0 1px;
  font-family: "Liberation Sans", "Noto Sans CJK SC", sans-serif;
`

const DialogActions = styled.div`
  display: flex;
  justify-content: flex-end;
  gap: 34px;
  padding: 12px 15px 0 0;
`

const DialogButton = styled.button`
  width: 58px;
  height: 20px;
  border: ${p => (p.$primary ? "2px solid #0078d7" : "1px solid #adadad")};
  background: #e1e1e1;
`

const HelperDialog = () => (
  <Dialog role="dialog" aria-labelledby="helper-title">
    <DialogHead>
      <DialogTitle id="helper-title">钢筋输入助手-墙垂直分布钢筋</DialogTitle>
      <button type="button" aria-label="关闭">
        <Icon name="cross" />
      </button>
    </DialogHead>
    <DialogBody>
      <RebarInput aria-label="钢筋信息" defaultValue="(1)C18@150+(1)C20@150" />
      <Columns>
        <Caption>1.输入格式</Caption>
        <Caption $inset>2.输入说明</Caption>
        <ListBox>
          <FormatList>
            {formats.map((text, i) => (
              <FormatItem key={text} $selected={i === 0}>
                <Pitch text={text} />
              </FormatItem>
            ))}
          </FormatList>
          <ScrollTrack $row>
            <Icon name="chevLeft" />
            <ScrollThumb $row $size={17} />
            <Fill />
            <Icon name="chevRight" />
          </ScrollTrack>
        </ListBox>
        <ListBox>
          <HelpText>
            排数+级别+直径+@+间距，排数没有输入时默认为2；输入“*”时表示该排垂直筋在本层锚固计算。
          </HelpText>
        </ListBox>
      </Columns>
      <DialogActions>
        <DialogButton type="button" $primary>
          确定
        </DialogButton>
        <DialogButton type="button">取消</DialogButton>
      </DialogActions>
    </DialogBody>
  </Dialog>
)

const NavTreeRow = ({ node }) =>
  node.folder ? (
    <TreeRow>
      <Toggle>
        <Icon name={node.folder === "open" ? "chevDown" : "treeRight"} />
      </Toggle>
      <Icon name={node.folder === "open" ? "folderOpen" : "folderClosed"} />
      <TreeLabel>
        <Pitch text={node.label} />
      </TreeLabel>
    </TreeRow>
  ) : (
    <TreeRow>
      <Trunk />
      <Trunk $branch $last={node.last} />
      <Icon name={node.icon} />
      <TreeLabel $active={node.active}>
        <Pitch text={node.label} />
      </TreeLabel>
    </TreeRow>
  )

const App = () => (
  <Shell>
    <GlobalStyle />
    <TitleBar>
      <Icon name="app" />
      <AppTitle>
        {"广联达BIM钢筋算量软件 GGJ2013 - [C:\\Users\\Administrator.PC-20141127NRHM\\Desktop\\白龙村-2016-08-25-13-27-07(2166版)_16G.GGJ12]"}
      </AppTitle>
      <TaskGroup>
        <WindowButton type="button" aria-label="最小化"><Icon name="min" size={14} /></WindowButton>
        <WindowButton type="button" aria-label="还原"><Icon name="restore" size={14} /></WindowButton>
        <WindowButton type="button" aria-label="关闭"><Icon name="cross" size={16} /></WindowButton>
      </TaskGroup>
    </TitleBar>

    <MenuBar>
      <MenuList>
        {menus.map(name => (
          <MenuButton type="button" key={name}>{name}</MenuButton>
        ))}
        <MenuButton type="button">
          <Icon name="docPlus" />
          新建变更
          <CaretShape $tight />
        </MenuButton>
        <MenuButton type="button">
          <Icon name="mascot" />
          广小二
        </MenuButton>
      </MenuList>
      <TipPanel>
        <TipLink href="#tip">两种汇总方式的区别是..</TipLink>
      </TipPanel>
      <AccountPanel>
        <MenuButton type="button">
          <Icon name="user" />
          13907298339
          <CaretShape $tight />
        </MenuButton>
        <span>造价豆:0</span>
        <Icon name="bell" />
        <Fill />
        <More>»</More>
      </AccountPanel>
    </MenuBar>

    <ToolBar>
      <ToolPanel $width={150}>
        <Tool icon="page" />
        <ToolButton type="button" aria-label="打开">
          <Icon name="folderOpenBig" />
          <CaretShape />
        </ToolButton>
        <Tool icon="save" />
        <Separator />
        <ToolButton type="button" aria-label="撤销">
          <Icon name="undo" />
          <CaretShape />
        </ToolButton>
        <Fill />
        <More>»</More>
      </ToolPanel>
      <ToolPanel $width={549}>
        {drawTools.map(tool => (
          <Tool key={tool.label} {...tool} />
        ))}
        <Fill />
        <More>»</More>
      </ToolPanel>
      <ToolPanel>
        <BoxedTool type="button" $off>
          <Icon name="flat" />
          <ToolLabel>二维</ToolLabel>
          <CaretShape />
        </BoxedTool>
        {viewTools.map((tool, i) => (tool.sep ? <Separator key={i} /> : <Tool key={i} {...tool} off />))}
        <Fill />
        <More>»</More>
      </ToolPanel>
    </ToolBar>

    <Body>
      <NavPanel>
        <NavHead>
          模块导航栏
          <Fill />
          <Icon name="pin" size={13} />
          <Icon name="cross" size={12} />
        </NavHead>
        <NavButton type="button">工程设置</NavButton>
        <NavButton type="button">绘图输入</NavButton>
        <NavTools>
          <Icon name="expandAll" />
          <Icon name="collapseAll" />
        </NavTools>
        <NavTreeBox>
          <TreeList>
            {navTree.map((node, i) => (
              <NavTreeRow key={i} node={node} />
            ))}
          </TreeList>
          <ScrollTrack>
            <Icon name="chevUp" />
            <ScrollThumb $size={217} />
            <Fill />
            <Icon name="chevDown" />
          </ScrollTrack>
          <ScrollTrack $row>
            <Icon name="chevLeft" />
            <ScrollThumb $row $size={102} />
            <Fill />
            <Icon name="chevRight" />
          </ScrollTrack>
          <ScrollTrack />
        </NavTreeBox>
        <NavButton type="button">单构件输入</NavButton>
        <NavButton type="button">报表预览</NavButton>
      </NavPanel>

      <Workspace>
        <PartToolBar>
          <Tool icon="addNew" label="新建" caret="tight" />
          <Tool icon="remove" label="删除" />
          <Tool icon="copy" label="复制" />
          <Tool icon="rename" label="重命名" />
          <Separator />
          <PlainLabel htmlFor="floor">楼层</PlainLabel>
          <FloorPicker>
            <FloorSelect id="floor" defaultValue="基础层">
              <option>基础层</option>
              <option>首层</option>
            </FloorSelect>
            <CaretShape />
          </FloorPicker>
          <Separator />
          <Tool icon="sortAz" label="排序" caret="tight" />
          <Tool icon="funnel" label="过滤" caret="tight" />
          <Separator />
          <Tool icon="copyFrom" label="从其他楼层复制构件" />
          <Tool icon="copyFrom" label="复制构件到其他楼层" />
          <Separator />
          <Tool label="查找" caret="tight" />
          <Separator />
          <Tool icon="arrowUp" label="上移" />
          <Tool icon="arrowDown" label="下移" off />
        </PartToolBar>

        <Split>
          <PartPanel>
            <SearchRow>
              <SearchInput type="text" placeholder="搜索构件..." aria-label="搜索构件" />
              <Icon name="magnify" />
            </SearchRow>
            <PartTree>
              <TreeRow>
                <Toggle>
                  <Icon name="chevDown" />
                </Toggle>
                <Icon name="wall" />
                <TreeLabel>剪力墙</TreeLabel>
              </TreeRow>
              {walls.map((name, i) => (
                <TreeRow key={name}>
                  <Toggle />
                  <Trunk $branch $width={18} $last={i === walls.length - 1} />
                  <PartName $selected={i === walls.length - 1}>
                    <Icon name="cog" size={14} />
                    <Half>{name}</Half>
                  </PartName>
                </TreeRow>
              ))}
            </PartTree>
          </PartPanel>

          <Editor>
            <TabStrip>
              <Tab type="button">属性编辑</Tab>
            </TabStrip>
            <Sheet>
              <SheetFrame>
                <Grid>
                  <colgroup>
                    <col width="22" />
                    <col width="191" />
                    <col width="269" />
                    <col width="31" />
                  </colgroup>
                  <thead>
                    <tr>
                      <th aria-label="序号" />
                      <th scope="col">属性名称</th>
                      <ValueHead scope="col">属性值</ValueHead>
                      <th scope="col">附加</th>
                    </tr>
                  </thead>
                  <tbody>
                    {rows.map(row => (
                      <PropertyRow key={row.n} row={row} />
                    ))}
                  </tbody>
                </Grid>
              </SheetFrame>
            </Sheet>
          </Editor>
        </Split>
      </Workspace>
    </Body>

    <StatusBar>
      <StatusCell $width={148} />
      <StatusCell $width={78}><Pitch text="层高:3.55m" /></StatusCell>
      <StatusCell $width={98}><Pitch text="底标高:-3.58m" /></StatusCell>
      <StatusCell $width={48}><Pitch text="0" /></StatusCell>
      <StatusCell>
        <Pitch text="格式:排数+直径+@+间距,不同直径用加号连接,例如2C12@200表示2排钢筋;本层锚固在钢筋信息前输入*" />
      </StatusCell>
      <StatusCell $width={70}><Pitch text="364.2 FPS" /></StatusCell>
    </StatusBar>

    <TaskBar>
      <StartButton type="button" aria-label="开始"><Icon name="start" /></StartButton>
      <TaskSearch>
        <Icon name="cortana" size={23} />
        <TaskInput type="text" placeholder="在这里输入你要搜索的内容" />
        <Icon name="micThin" />
      </TaskSearch>
      <TaskGroup>
        <TaskButton type="button" aria-label="任务视图" $width={50}><Icon name="taskview" size={22} /></TaskButton>
        <TaskButton type="button" aria-label="风车" $width={50}><Icon name="pinwheel" size={22} /></TaskButton>
        <TaskButton type="button" aria-label="旋风" $width={50}><Icon name="swirl" size={20} /></TaskButton>
      </TaskGroup>
      <TaskGroup $gap={4}>
        <TaskButton type="button" aria-label="Edge" $width={47}><Icon name="edge" size={22} /></TaskButton>
        <TaskButton type="button" aria-label="应用商店" $width={47}><Icon name="store" size={24} /></TaskButton>
        <TaskButton type="button" aria-label="文件资源管理器" $width={47}><Icon name="explorer" size={22} /></TaskButton>
        <TaskButton type="button" aria-label="IE" $width={47}><Icon name="ie" size={24} /></TaskButton>
        <TaskButton type="button" aria-label="广联达" $width={47} $running><Icon name="blueSwirl" size={23} /></TaskButton>
        <TaskButton type="button" aria-label="浏览器" $width={47} $running><Icon name="greenE" size={23} /></TaskButton>
        <TaskButton type="button" aria-label="便笺" $width={47} $running><Icon name="note" size={24} /></TaskButton>
        <TaskButton type="button" aria-label="钢筋算量" $width={47} $active><Icon name="app" size={24} /></TaskButton>
        <TaskButton type="button" aria-label="帮助文档" $width={47} $running><Icon name="docHelp" size={20} /></TaskButton>
      </TaskGroup>
      <Fill />
      <TrayItem $width={72}>
        <span>6%</span>
        <span>CPU使用</span>
      </TrayItem>
      <TrayItem $width={26}><Icon name="trayUp" /></TrayItem>
      <TrayItem $width={24}><Icon name="battery" /></TrayItem>
      <TrayItem $width={24}><Icon name="wifi" /></TrayItem>
      <TrayItem $width={24}><Icon name="volume" size={18} /></TrayItem>
      <TrayItem $width={28}><Icon name="trayKeys" size={24} /></TrayItem>
      <TrayItem $width={29}><Icon name="trayA" /></TrayItem>
      <TrayItem $width={29}><Icon name="sogou" /></TrayItem>
      <TrayItem $width={78}>
        <span>17:00</span>
        <span>2017/10/25</span>
      </TrayItem>
      <NoticeButton type="button" aria-label="通知">
        <Icon name="notice" size={18} />
        <NoticeCount>2</NoticeCount>
      </NoticeButton>
      <ShowDesktop type="button" aria-label="显示桌面" />
    </TaskBar>

    <CpuBall>68</CpuBall>
    <ImeBar>
      <ImeLogo>
        <Icon name="sogou" size={30} />
      </ImeLogo>
      {["letterA", "comma", "mic", "keyboard", "person", "shirt", "wrench"].map(name => (
        <Icon key={name} name={name} />
      ))}
    </ImeBar>
    <HelperDialog />
    <Marker $x={555} $y={227} $w={233} $h={29} />
    <Marker $x={700} $y={286} $w={329} $h={48} />
  </Shell>
)

export default App
